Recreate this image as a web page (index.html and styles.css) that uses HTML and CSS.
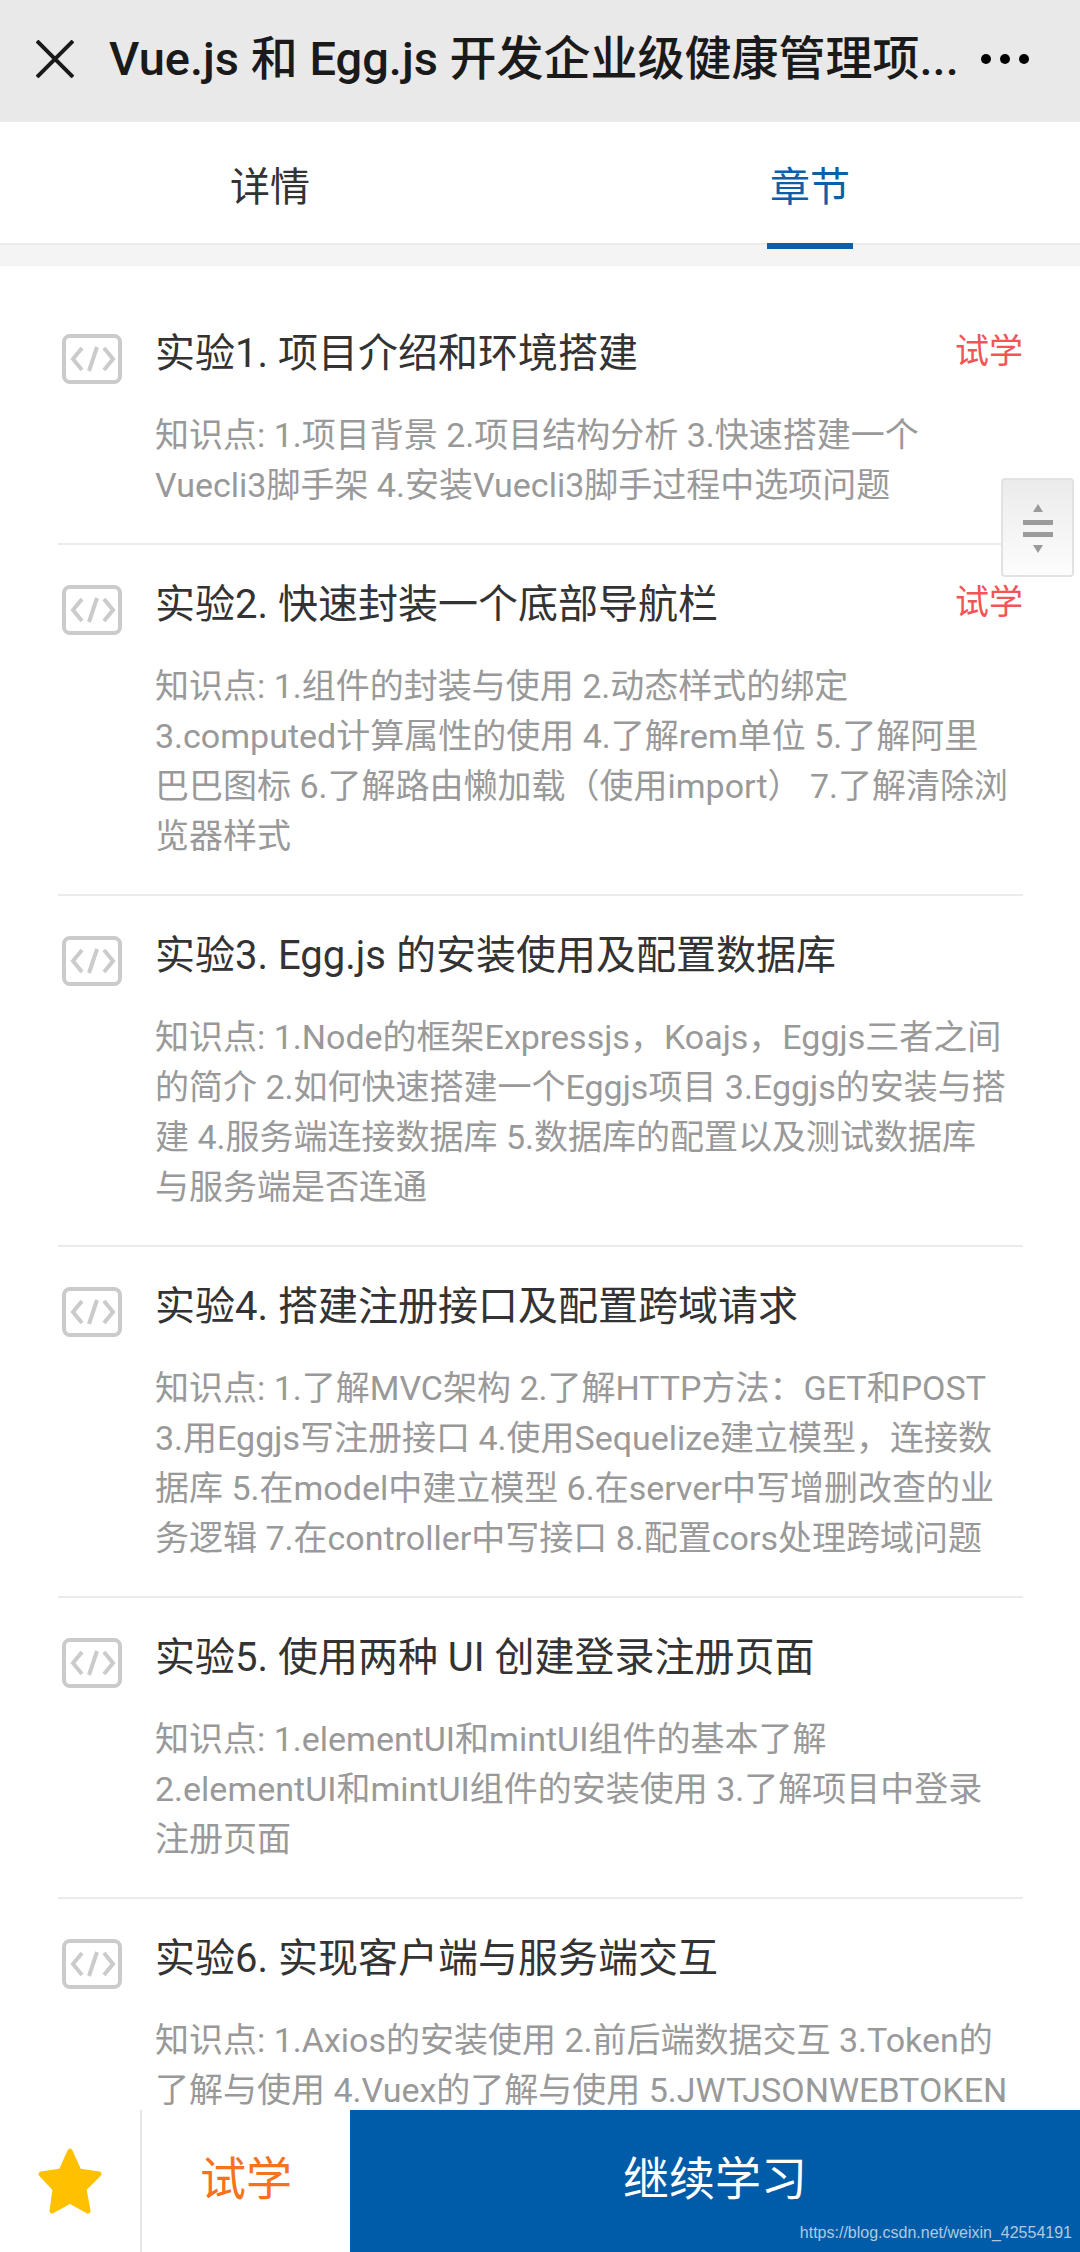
FILE: index.html
```html
<!DOCTYPE html>
<html lang="zh-CN">
<head>
  <meta charset="UTF-8">
  <meta name="viewport" content="width=device-width, initial-scale=1">
  <title>Vue.js 和 Egg.js 开发企业级健康管理项目</title>
  <link rel="stylesheet" href="styles.css">
</head>
<body>
  <!-- 图标定义 -->
  <svg class="defs" width="0" height="0" aria-hidden="true">
    <symbol id="icon-code" viewBox="0 0 60 50">
      <rect x="2" y="2" width="56" height="46" rx="6" fill="none" stroke="#cbcbcb" stroke-width="4"/>
      <path d="M20 14 L11 25 L20 36 M42 14 L51 25 L42 36 M35 13 L27 37" fill="none" stroke="#cbcbcb" stroke-width="4"/>
    </symbol>
  </svg>

  <!-- 顶部标题栏 -->
  <header class="navbar">
    <button type="button" class="nav-close" aria-label="关闭">
      <svg width="38" height="38" viewBox="0 0 38 38"><path d="M1 1 L37 37 M37 1 L1 37" stroke="#1a1a1a" stroke-width="4"/></svg>
    </button>
    <h1 class="nav-title">Vue.js 和 Egg.js 开发企业级健康管理项...</h1>
    <button type="button" class="nav-more" aria-label="更多">
      <svg width="50" height="12" viewBox="0 0 50 12"><circle cx="6" cy="6" r="5"/><circle cx="25" cy="6" r="5"/><circle cx="44" cy="6" r="5"/></svg>
    </button>
  </header>

  <nav class="tabs">
    <a class="tab" href="#detail">详情</a>
    <a class="tab active" href="#chapters">章节</a>
  </nav>

  <!-- 章节列表 -->
  <main class="content" id="chapters">
    <ul class="chapters">
      <li class="chapter">
        <svg class="chapter-icon"><use href="#icon-code"/></svg>
        <div class="chapter-body">
          <div class="chapter-head">
            <h2>实验1. 项目介绍和环境搭建</h2>
            <a class="trial" href="#trial">试学</a>
          </div>
          <p>知识点: 1.项目背景 2.项目结构分析 3.快速搭建一个<br>Vuecli3脚手架 4.安装Vuecli3脚手过程中选项问题</p>
        </div>
      </li>
      <li class="chapter">
        <svg class="chapter-icon"><use href="#icon-code"/></svg>
        <div class="chapter-body">
          <div class="chapter-head">
            <h2>实验2. 快速封装一个底部导航栏</h2>
            <a class="trial" href="#trial">试学</a>
          </div>
          <p>知识点: 1.组件的封装与使用 2.动态样式的绑定<br>3.computed计算属性的使用 4.了解rem单位 5.了解阿里<br>巴巴图标 6.了解路由懒加载（使用import） 7.了解清除浏<br>览器样式</p>
        </div>
      </li>
      <li class="chapter">
        <svg class="chapter-icon"><use href="#icon-code"/></svg>
        <div class="chapter-body">
          <div class="chapter-head">
            <h2>实验3. Egg.js 的安装使用及配置数据库</h2>
          </div>
          <p>知识点: 1.Node的框架Expressjs，Koajs，Eggjs三者之间<br>的简介 2.如何快速搭建一个Eggjs项目 3.Eggjs的安装与搭<br>建 4.服务端连接数据库 5.数据库的配置以及测试数据库<br>与服务端是否连通</p>
        </div>
      </li>
      <li class="chapter">
        <svg class="chapter-icon"><use href="#icon-code"/></svg>
        <div class="chapter-body">
          <div class="chapter-head">
            <h2>实验4. 搭建注册接口及配置跨域请求</h2>
          </div>
          <p>知识点: 1.了解MVC架构 2.了解HTTP方法：GET和POST<br>3.用Eggjs写注册接口 4.使用Sequelize建立模型，连接数<br>据库 5.在model中建立模型 6.在server中写增删改查的业<br>务逻辑 7.在controller中写接口 8.配置cors处理跨域问题</p>
        </div>
      </li>
      <li class="chapter">
        <svg class="chapter-icon"><use href="#icon-code"/></svg>
        <div class="chapter-body">
          <div class="chapter-head">
            <h2>实验5. 使用两种 UI 创建登录注册页面</h2>
          </div>
          <p>知识点: 1.elementUI和mintUI组件的基本了解<br>2.elementUI和mintUI组件的安装使用 3.了解项目中登录<br>注册页面</p>
        </div>
      </li>
      <li class="chapter">
        <svg class="chapter-icon"><use href="#icon-code"/></svg>
        <div class="chapter-body">
          <div class="chapter-head">
            <h2>实验6. 实现客户端与服务端交互</h2>
          </div>
          <p>知识点: 1.Axios的安装使用 2.前后端数据交互 3.Token的<br>了解与使用 4.Vuex的了解与使用 5.JWTJSONWEBTOKEN</p>
        </div>
      </li>
    </ul>
  </main>

  <!-- 快速滚动手柄 -->
  <button type="button" class="scroll-handle" aria-label="滚动">
    <svg width="30" height="50" viewBox="0 0 30 50" fill="#9b9b9b">
      <path d="M15 1 L20 9 H10 Z M0 17 H30 V22 H0 Z M0 29 H30 V34 H0 Z M10 42 H20 L15 50 Z"/>
    </svg>
  </button>

  <!-- 底部操作栏 -->
  <footer class="actions">
    <button type="button" class="btn-star" aria-label="收藏">
      <svg width="66" height="68" viewBox="0 0 66 68">
        <path d="M33 4 L42 24 L62 27 L47 42 L51 64 L33 54 L15 64 L18 42 L4 27 L24 24 Z" fill="#ffc000" stroke="#ffc000" stroke-width="5" stroke-linejoin="round"/>
      </svg>
    </button>
    <button type="button" class="btn-trial">试学</button>
    <button type="button" class="btn-continue">继续学习</button>
    <small class="watermark">https://blog.csdn.net/weixin_42554191</small>
  </footer>
</body>
</html>
```
FILE: styles.css
```css
* {
  box-sizing: border-box;
  margin: 0;
  padding: 0;
}
body {
  display: flex;
  flex-direction: column;
  height: 100vh;
  position: relative;
  background: #fff;
  color: #333;
  font-family: Roboto, "Noto Sans CJK SC", sans-serif;
}
button {
  border: none;
  background: none;
  font-family: inherit;
  cursor: pointer;
}
a {
  color: inherit;
  text-decoration: none;
}
svg {
  display: block;
}
.defs {
  position: absolute;
}
/* 顶部标题栏 */
.navbar {
  flex: none;
  display: flex;
  align-items: center;
  height: 122px;
  padding: 0 50px 4px 36px;
  background: #e9e9e9;
}
.nav-title {
  flex: 1;
  min-width: 0;
  margin-left: 35px;
  overflow: hidden;
  white-space: nowrap;
  font-size: 47px;
  font-weight: 500;
  line-height: 70px;
  color: #1a1a1a;
}
/* 选项卡 */
.tabs {
  flex: none;
  display: flex;
  height: 144px;
  background: linear-gradient(#fff 121px, #ebebeb 121px, #ebebeb 123px, #f4f4f4 123px);
}
.tab {
  flex: 1;
  position: relative;
  text-align: center;
  font-size: 40px;
  line-height: 132px;
}
.tab.active {
  color: #0d5fa8;
}
.tab.active::after {
  content: "";
  position: absolute;
  top: 121px;
  left: 50%;
  width: 86px;
  height: 6px;
  margin-left: -43px;
  background: #0d5fa8;
}
/* 章节列表 */
.content {
  flex: 1;
  min-height: 0;
  overflow-y: auto;
  scrollbar-width: none;
  padding: 28px 57px 0 58px;
}
.chapters {
  list-style: none;
}
.chapter {
  display: flex;
  padding: 35px 0 33px;
  border-bottom: 2px solid #ebebeb;
}
.chapter:last-child {
  padding-bottom: 0;
  border-bottom: none;
}
.chapter-icon {
  flex: none;
  width: 60px;
  height: 50px;
  margin: 5px 33px 0 4px;
}
.chapter-body {
  flex: 1;
  min-width: 0;
}
.chapter-head {
  display: flex;
  justify-content: space-between;
  margin-bottom: 31px;
  line-height: 50px;
}
.chapter-head h2 {
  font-size: 40px;
  font-weight: 400;
}
.trial {
  font-size: 34px;
  line-height: 44px;
  color: #f25555;
}
.chapter p {
  font-size: 34px;
  line-height: 50px;
  white-space: nowrap;
  color: #999;
}
/* 滚动手柄 */
.scroll-handle {
  position: absolute;
  top: 478px;
  right: 6px;
  display: flex;
  align-items: center;
  justify-content: center;
  width: 73px;
  height: 99px;
  border: 2px solid #e2e2e2;
  border-radius: 4px;
  background: linear-gradient(#ebebeb, #fdfdfd);
}
/* 底部操作栏 */
.actions {
  flex: none;
  position: relative;
  display: flex;
  height: 142px;
  background: #fff;
}
.actions button {
  font-size: 46px;
  line-height: 138px;
  padding-bottom: 4px;
}
.actions .btn-star {
  display: flex;
  align-items: center;
  justify-content: center;
  width: 142px;
  padding: 0;
  border-right: 2px solid #e6e6e6;
}
.actions .btn-trial {
  width: 208px;
  color: #f5731c;
}
.actions .btn-continue {
  flex: 1;
  background: #005ca8;
  color: #fff;
}
.watermark {
  position: absolute;
  right: 8px;
  bottom: 9px;
  font-family: "Liberation Sans", Arial, sans-serif;
  font-size: 16px;
  line-height: 20px;
  color: #b0c9e0;
}
```
